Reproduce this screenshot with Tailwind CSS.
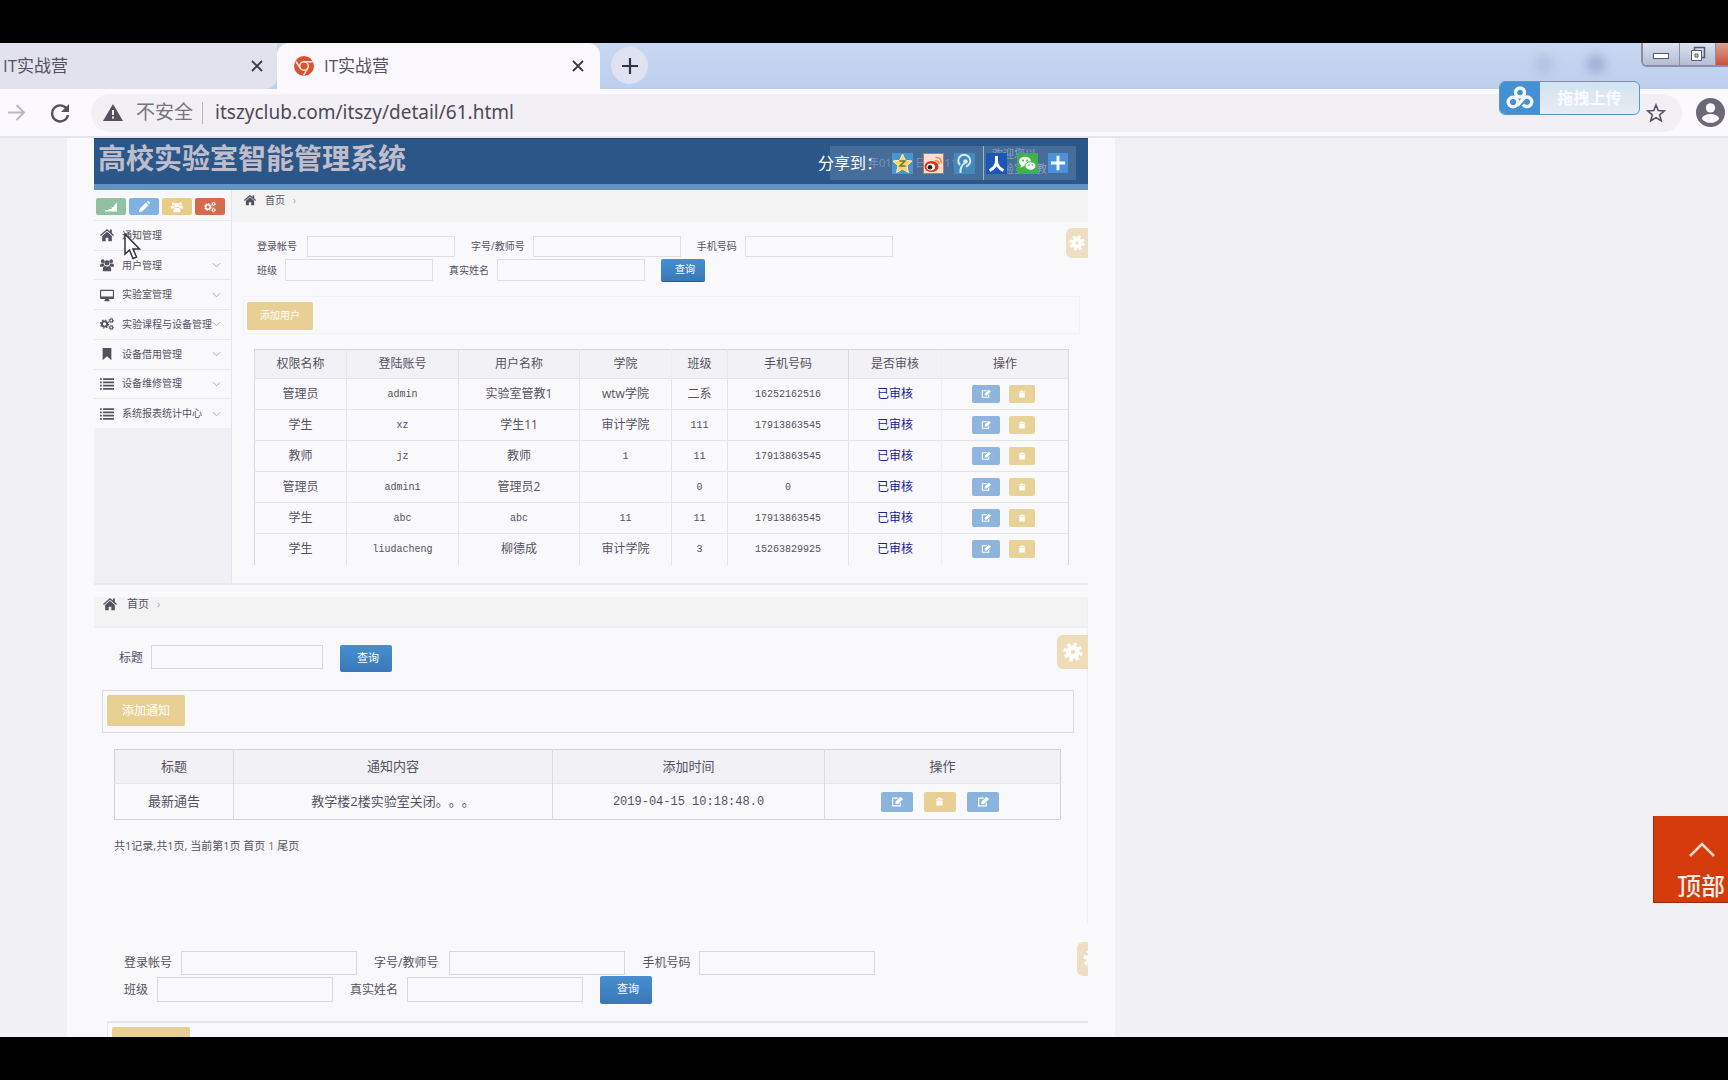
<!DOCTYPE html>
<html lang="zh-CN">
<head>
<meta charset="utf-8">
<title>IT实战营</title>
<script src="https://cdn.jsdelivr.net/npm/@tailwindcss/browser@4"></script>
</head>
<body class="h-screen flex flex-col overflow-hidden bg-black font-['Open_Sans','Noto_Sans_CJK_SC',sans-serif] text-[#55525f] [text-spacing-trim:space-all]">
<svg class="hidden">
  <symbol id="home" viewBox="0 0 16 16"><path fill="currentColor" d="M8 1 0 8l1 1.200L8 3.200l7 6L16 8l-2.500-2.200V1.800h-2V4zM8 4.300 2.500 9v6H6.500v-4h3v4h4V9z"/></symbol>
  <symbol id="users" viewBox="0 0 16 16"><g fill="currentColor"><circle cx="3.200" cy="3.600" r="2.100"/><circle cx="12.800" cy="3.600" r="2.100"/><circle cx="8" cy="5.500" r="2.900"/><path d="M0 10V8.500Q0 6.300 2 6.300h2.500q0 2 1 2.700-1.500.2-2.200 1zM16 10V8.500q0-2.200-2-2.200h-2.500q0 2-1 2.700 1.500.2 2.200 1zM3.300 15v-2.500Q3.500 9 6 9q2 1.200 4 0 2.500 0 2.700 3.500V15z"/></g></symbol>
  <symbol id="desktop" viewBox="0 0 16 16"><path fill="currentColor" d="M1 2h14q1 0 1 1v8.500q0 1-1 1h-5l.5 1.500H11v1H5v-1h.5L6 12.500H1q-1 0-1-1V3q0-1 1-1zm.3 1.300v6.500h13.400V3.300z"/></symbol>
  <symbol id="cogs" viewBox="0 0 16 16"><g fill="none" stroke="currentColor"><circle cx="5.200" cy="8" r="3" stroke-width="2.200"/><circle cx="5.200" cy="8" r="4.600" stroke-width="1.300" stroke-dasharray="1.800 1.810"/><circle cx="12.800" cy="4" r="1.700" stroke-width="1.300"/><circle cx="12.800" cy="12" r="1.700" stroke-width="1.300"/><circle cx="12.800" cy="4" r="2.700" stroke-width="1" stroke-dasharray="1 1.120"/><circle cx="12.800" cy="12" r="2.700" stroke-width="1" stroke-dasharray="1 1.120"/></g></symbol>
  <symbol id="bookmark" viewBox="0 0 16 16"><path fill="currentColor" d="M3 1h10v14l-5-4.500L3 15z"/></symbol>
  <symbol id="list" viewBox="0 0 16 16"><path fill="currentColor" d="M0 1.500h2v2H0zm3.500 0H16v2H3.500zM0 5.200h2v2H0zm3.500 0H16v2H3.500zM0 8.900h2v2H0zm3.500 0H16v2H3.500zM0 12.600h2v2H0zm3.500 0H16v2H3.500z"/></symbol>
  <symbol id="signal" viewBox="0 0 16 16"><path fill="currentColor" d="M0 14h16V2l-4 4v2H9v2.500H5V12H0z"/></symbol>
  <symbol id="pencil" viewBox="0 0 16 16"><path fill="currentColor" d="m1 15 1-4.500L10.500 2l3.500 3.500L5.500 14zM11.500 1l1-.8h1.500L15.800 2v1.500l-.8 1z"/></symbol>
  <symbol id="edit" viewBox="0 0 16 16"><path fill="currentColor" d="M2 2h8L8.500 3.700H3v8.600h8.500V10l1.700-1.700V14H1.300V2zm4 5.500L12.500 1 16 4 9.500 10.500H6z"/></symbol>
  <symbol id="trash" viewBox="0 0 16 16"><path fill="currentColor" d="M6 1h4l1 2h3.500v2h-13V3H5zM2.500 6h11v9h-11z"/></symbol>
  <symbol id="gear" viewBox="0 0 20 20"><circle cx="10" cy="10" r="4.500" fill="none" stroke="currentColor" stroke-width="4.500"/><circle cx="10" cy="10" r="8" fill="none" stroke="currentColor" stroke-width="3.200" stroke-dasharray="3.500 2.780"/></symbol>
  <symbol id="chev" viewBox="0 0 10 6"><path d="m1 1 4 4 4-4" fill="none" stroke="currentColor"/></symbol>
  <symbol id="close" viewBox="0 0 12 12"><path d="m1 1 10 10M11 1 1 11" stroke="currentColor" stroke-width="1.800"/></symbol>
</svg>

<div class="h-[43px] shrink-0 bg-black"></div>

<!-- tab strip -->
<header class="relative flex h-[46px] shrink-0 bg-linear-to-b from-[#c9d8f1] to-[#bccfee] text-[17px]">
  <div class="flex w-[277px] items-center rounded-br-xl bg-[#e1e2ee] pr-[14px] pl-[3px]"><span class="grow">IT实战营</span><button aria-label="关闭" class="text-[#3a3946]"><svg class="size-3"><use href="#close"/></svg></button></div>
  <div class="flex w-[323px] items-center rounded-t-xl bg-[#fbf9fd] pr-4 pl-[17px]">
    <svg class="mr-[10px] size-5" viewBox="0 0 20 20"><circle cx="10" cy="10" r="10" fill="#d9532e"/><circle cx="10" cy="10" r="4.300" fill="#d9532e" stroke="#fbe9e4" stroke-width="1.500"/><path d="M10 5.700h8.800M6.300 12.200 2 5.500m11.700 6.700L9.500 19.500" stroke="#fbe9e4" stroke-width="1.500"/></svg>
    <span class="grow">IT实战营</span><button aria-label="关闭" class="text-[#3a3946]"><svg class="size-3"><use href="#close"/></svg></button>
  </div>
  <button aria-label="新标签页" class="mt-1 ml-[11px] flex size-[37px] items-center justify-center rounded-full bg-[#dfe2f0] text-[#33323f]"><svg class="size-4" viewBox="0 0 16 16"><path d="M8 0v16M0 8h16" stroke="currentColor" stroke-width="2.200"/></svg></button>
  <div class="absolute top-[11px] right-[122px] flex gap-8 blur-[4px]"><span class="size-5 rounded-full bg-[#b3c2e2]"></span><span class="size-5 rounded-full bg-[#a3b3d8]"></span></div>
  <div class="absolute top-0 right-0 flex h-6 overflow-hidden rounded-bl-md border-b-2 border-l-2 border-[#8890a8]">
    <button aria-label="最小化" class="flex w-[37px] items-center justify-center border-r border-[#8890a8] bg-linear-to-b from-[#dce2f0] to-[#b4bdd3]"><span class="mt-1 h-[6px] w-4 border border-[#555b70] bg-white"></span></button>
    <button aria-label="还原" class="flex w-[36px] items-center justify-center border-r border-[#8890a8] bg-linear-to-b from-[#dce2f0] to-[#b4bdd3]"><svg class="size-4" viewBox="0 0 16 16"><path d="M4.500 4V1.500h10v10H12" fill="none" stroke="#555b70" stroke-width="1.500"/><path d="M1.500 4.500h10v10h-10z" fill="#fff" stroke="#555b70"/><path d="M5 8h3v3H5z" fill="#c5cbdc" stroke="#555b70"/></svg></button>
    <button aria-label="关闭窗口" class="w-3 bg-linear-to-b from-[#dfa194] to-[#c3533c]"></button>
  </div>
</header>

<!-- toolbar -->
<nav class="relative flex h-[49px] shrink-0 items-center border-b-2 border-[#e6e3ea] bg-[#fbf9fd] pr-[3px]">
  <button aria-label="前进" class="ml-[7px] text-[#bab8c2]"><svg class="size-[19px]" viewBox="0 0 19 19"><path d="M1 9.500h16M9.500 2l7.500 7.500L9.500 17" fill="none" stroke="currentColor" stroke-width="2"/></svg></button>
  <button aria-label="刷新" class="ml-6 text-[#55525f]"><svg class="size-5" viewBox="0 0 20 20"><path d="M16.500 5.500A8 8 0 1 0 18 12" fill="none" stroke="currentColor" stroke-width="2.400"/><path d="M19 1v8h-8z" fill="currentColor"/></svg></button>
  <div class="ml-[21px] flex h-[38px] grow items-center rounded-full bg-[#f2f0f5] pl-3">
    <svg class="h-[17px] w-5" viewBox="0 0 20 17"><path d="M10 0 20 17H0z" fill="#55525f"/><path d="M10 6v5m0 1.500v2" stroke="#f2f0f5" stroke-width="2"/></svg>
    <span class="ml-[13px] text-[19px] text-[#77747f]">不安全</span>
    <span class="ml-[9px] h-[22px] w-px bg-[#b5b3bc]"></span>
    <input aria-label="网址" value="itszyclub.com/itszy/detail/61.html" class="ml-3 w-10 grow bg-transparent font-['Noto_Sans',sans-serif] text-[19px] text-[#4d4a56] outline-none">
    <button aria-label="收藏" class="mr-4 text-[#55525f]"><svg class="size-5" viewBox="0 0 20 20"><path d="m10 2 2.300 5.600 6 .4-4.600 3.900 1.500 5.900L10 14.600l-5.200 3.200 1.500-5.900L1.700 8l6-.4z" fill="none" stroke="currentColor" stroke-width="1.600"/></svg></button>
  </div>
  <button aria-label="用户" class="ml-[14px]"><svg class="size-[29px]" viewBox="0 0 28 28"><circle cx="14" cy="14" r="14" fill="#6b6877"/><circle cx="14" cy="9.500" r="4.500" fill="#fbf9fd"/><path d="M5.500 20q2-4.500 8.500-4.500t8.500 4.500q-3 4-8.500 4t-8.500-4z" fill="#fbf9fd"/></svg></button>
  <button class="absolute -top-2 right-[88px] flex h-[34px] w-[141px] overflow-hidden rounded-md border border-[#5b96cc] bg-linear-to-b from-[#d3e3ef] to-[#e6ecf3] text-base text-white/85">
    <span class="flex h-full w-10 items-center justify-center bg-[#4590d2]"><svg class="h-6 w-7" viewBox="0 0 28 24" fill="none" stroke="#f3f8fd" stroke-width="3.400"><circle cx="14" cy="6.500" r="4.500"/><circle cx="7" cy="16" r="4.800"/><path d="M17 18.500a4.800 4.800 0 1 0 .5-6l-6 7"/></svg></span>
    <span class="flex h-full grow items-center justify-center font-bold">拖拽上传</span>
  </button>
</nav>

<!-- page -->
<main class="relative min-h-0 grow overflow-hidden bg-[#f1f0f5] pl-[67px]">
  <article class="h-full max-w-[1048px] overflow-hidden bg-[#f9f8fb] pr-[27px] pl-[27px]">
    <div class="flex h-[52px] items-start justify-between border-t border-b-[6px] border-t-[#1d4066] border-b-[#6593c0] bg-[#2b5688] pl-1">
      <h1 class="mt-[3px] text-[28px] leading-8 font-bold text-[#bfbdcb]">高校实验室智能管理系统</h1>
      <div class="relative mt-[7px] mr-3 flex h-[34px] w-[246px] items-center bg-[#466c99] pl-[62px]">
        <span class="absolute left-[38px] text-[11px] whitespace-pre text-[#7b95b7]">年01月11日 11:11分</span>
        <span class="absolute top-0 left-[162px] text-[11px] leading-[15px] text-[#8ba3c2]">欢迎您以<br>实验室管教1</span>
        <span class="absolute -left-3 text-base text-white">分享到：</span>
        <div class="relative flex items-center">
          <a href="#" aria-label="QQ空间"><svg class="size-[21px]" viewBox="0 0 21 21"><rect width="21" height="21" fill="#4b95cf"/><path d="m10.500 1 2.800 6.300 6.700.7-5 4.600 1.400 6.900-5.900-3.500-5.900 3.500L6 12.600 1 8l6.700-.7z" fill="#fbd65b" stroke="#fff2b8"/><path d="M7.500 8h5.500l-5 5h5.500" fill="none" stroke="#6f7242" stroke-width="1.500"/></svg></a>
          <a href="#" aria-label="微博" class="ml-[10px]"><svg class="size-[21px]" viewBox="0 0 21 21"><rect x=".5" y=".5" width="20" height="20" fill="#fbe0d2" stroke="#dd6b54"/><ellipse cx="8.500" cy="13.500" rx="7" ry="5.500" fill="#d3341d"/><ellipse cx="7.800" cy="14" rx="4.300" ry="3.400" fill="#fff"/><circle cx="7" cy="14.300" r="2.300" fill="#222"/><path d="M12 8q4-1 4 3.500M12.500 4.500q6-.5 6 6" fill="none" stroke="#e98a4c" stroke-width="1.600"/></svg></a>
          <a href="#" aria-label="腾讯微博" class="ml-[10px]"><svg class="size-[21px]" viewBox="0 0 21 21"><rect width="21" height="21" fill="#4488bd"/><path d="M6 12a6 6 0 1 1 6 1.500M6.500 20q-.5-7 4.500-10" fill="none" stroke="#d7ebf8" stroke-width="2"/><circle cx="11.500" cy="8.500" r="2.300" fill="#d7ebf8"/></svg></a>
          <span class="ml-2 h-[34px] w-px bg-[#9fb3cc]"></span>
          <a href="#" aria-label="人人网" class="ml-[2px]"><svg class="size-[21px]" viewBox="0 0 21 21"><rect width="21" height="21" fill="#1b57b6"/><path d="M10.500 3v5q0 6-7 9.500M10.500 8q0 6 7 9.500" fill="none" stroke="#fff" stroke-width="3"/></svg></a>
          <a href="#" aria-label="微信" class="ml-[10px]"><svg class="size-[21px]" viewBox="0 0 21 21"><rect width="21" height="21" fill="#3fb24f"/><ellipse cx="8" cy="8.500" rx="6" ry="4.800" fill="#f3fbf3"/><path d="m4 11-.5 4 3.500-2z" fill="#f3fbf3"/><ellipse cx="13.500" cy="13" rx="5.500" ry="4.300" fill="#f3fbf3" stroke="#3fb24f"/><g fill="#3fb24f"><circle cx="6" cy="7.500" r="1"/><circle cx="10" cy="7.500" r="1"/><circle cx="12" cy="12" r=".8"/><circle cx="15.500" cy="12" r=".8"/></g></svg></a>
          <a href="#" aria-label="更多" class="ml-[10px]"><svg class="size-[20px]" viewBox="0 0 21 21"><rect width="21" height="21" rx="1" fill="#4b92dc"/><path d="M10.500 3v15M3 10.500h15" stroke="#fff" stroke-width="3"/></svg></a>
        </div>
      </div>
    </div>

    <!-- first screen: user management -->
    <section class="flex h-[395px] border-b-2 border-[#ebe9ef]">
      <aside class="relative w-[138px] shrink-0 border-r border-[#e6e4eb] bg-[#f1f0f5]">
        <div class="flex h-[30px] gap-[3px] bg-[#f8f7fa] pt-2 pl-[2px] text-white">
          <button aria-label="统计" class="flex h-[17px] w-[30px] items-center justify-center rounded-xs bg-[#90c1a0]"><svg class="size-3"><use href="#signal"/></svg></button>
          <button aria-label="编辑" class="flex h-[17px] w-[30px] items-center justify-center rounded-xs bg-[#7fb2e2]"><svg class="size-3"><use href="#pencil"/></svg></button>
          <button aria-label="用户" class="flex h-[17px] w-[30px] items-center justify-center rounded-xs bg-[#e8cc88]"><svg class="size-3"><use href="#users"/></svg></button>
          <button aria-label="设置" class="flex h-[17px] w-[30px] items-center justify-center rounded-xs bg-[#d56a4c]"><svg class="size-3"><use href="#cogs"/></svg></button>
        </div>
        <ul id="menu" class="grid h-[208px] auto-rows-fr bg-[#f9f8fb] text-[10px]"></ul>
        <svg class="absolute top-[43px] left-[30px] h-[27px] w-[17px]" viewBox="0 0 17 27"><path d="M1 1v20l4.500-4 3.500 8.500 3.500-1.500L9 16h6.500z" fill="#fff" stroke="#33313b" stroke-width="1.500"/></svg>
      </aside>
      <div class="relative min-w-0 grow">
        <div class="flex h-8 items-start bg-[#f3f3f3] pt-1 pl-3 text-[10px]"><svg class="size-3"><use href="#home"/></svg><a href="#" class="ml-[9px] leading-3">首页</a><span class="ml-2 leading-3 text-[#a9a7af]">›</span></div>
        <button aria-label="设置" class="absolute top-[38px] right-0 flex h-[30px] w-[22px] items-center justify-center rounded-l-md bg-[#eedfc4] text-white"><svg class="size-4"><use href="#gear"/></svg></button>
        <form class="mt-[14px] flex flex-col gap-[2px] pl-[25px] text-[10px]">
          <div class="flex h-[21px] items-center">
            <label for="a1">登录帐号</label><input id="a1" class="mr-4 ml-[10px] h-full w-[148px] border border-[#e0dee5]">
            <label for="a2">字号/教师号</label><input id="a2" class="mr-4 ml-2 h-full w-[148px] border border-[#e0dee5]">
            <label for="a3">手机号码</label><input id="a3" class="ml-2 h-full w-[148px] border border-[#e0dee5]">
          </div>
          <div class="flex h-[22px] items-center">
            <label for="a4">班级</label><input id="a4" class="mr-4 ml-2 h-full w-[148px] border border-[#e0dee5]">
            <label for="a5">真实姓名</label><input id="a5" class="mr-4 ml-2 h-full w-[148px] border border-[#e0dee5]">
            <button type="button" class="h-[23px] w-[44px] rounded-xs border-b border-[#2c5d8f] bg-linear-to-b from-[#478fd0] to-[#3a78b8] pl-1 text-white">查询</button>
          </div>
        </form>
        <div class="mt-[15px] mr-2 ml-[11px] h-[38px] border border-[#f2f1f5] pt-1 pl-[3px]"><button class="h-7 w-[66px] rounded-xs bg-[#e8d095] text-[10px] text-white">添加用户</button></div>
        <table class="mt-[15px] ml-[22px] w-[815px] table-fixed border-collapse border border-b-0 border-[#d9d7de] text-center text-[12px]">
          <colgroup><col class="w-[92px]"><col class="w-[112px]"><col class="w-[121px]"><col class="w-[92px]"><col class="w-[56px]"><col class="w-[121px]"><col class="w-[93px]"><col></colgroup>
          <thead><tr class="h-[29px] bg-[#f2f1f5]"><th class="border-r border-[#e8e6ec] font-normal">权限名称</th><th class="border-r border-[#e2e0e7] font-normal">登陆账号</th><th class="border-r border-[#e8e6ec] font-normal">用户名称</th><th class="border-r border-[#f0eef3] font-normal">学院</th><th class="border-r border-[#e8e6ec] font-normal">班级</th><th class="border-r border-[#d9d7de] font-normal">手机号码</th><th class="border-r border-[#f0eef3] font-normal">是否审核</th><th class="font-normal">操作</th></tr></thead>
          <tbody id="rows"></tbody>
        </table>
      </div>
    </section>

    <!-- second screen: notices -->
    <section class="relative mt-3 border-r border-[#f1eff4]">
      <div class="flex h-[31px] items-start border-b-2 border-[#efedf1] bg-[#f3f3f3] pl-[9px] text-[11px]"><svg class="size-[14px]"><use href="#home"/></svg><a href="#" class="ml-[10px] leading-[14px]">首页</a><span class="ml-2 leading-[14px] text-[#a9a7af]">›</span></div>
      <button aria-label="设置" class="absolute top-[38px] -right-px flex h-[34px] w-[31px] items-center justify-center rounded-l-md bg-[#efdcb9] text-white"><svg class="size-5"><use href="#gear"/></svg></button>
      <form class="mt-[17px] flex h-[27px] items-start pl-[25px] text-[12px]"><label for="b1" class="mt-1">标题</label><input id="b1" class="ml-2 h-6 w-[172px] border border-[#d9d7de]"><button type="button" class="ml-[17px] h-[27px] w-[52px] rounded-xs bg-linear-to-b from-[#478fd0] to-[#3a78b8] pl-1 text-[11px] text-white">查询</button></form>
      <div class="mt-[18px] mr-[13px] ml-2 h-[43px] border border-[#dddbe2] pt-1 pl-1"><button class="h-[31px] w-[78px] rounded-xs bg-[#e8d095] text-[12px] text-white">添加通知</button></div>
      <table class="mt-4 ml-5 w-[947px] table-fixed border-collapse border border-[#d3d1d8] text-center text-[13px]">
        <colgroup><col class="w-[119px]"><col class="w-[319px]"><col class="w-[272px]"><col></colgroup>
        <thead><tr class="h-[34px] border-b border-[#e8e6ec] bg-[#f2f1f5]"><th class="border-r border-[#dddbe2] font-normal">标题</th><th class="border-r border-[#dddbe2] font-normal">通知内容</th><th class="border-r border-[#dddbe2] font-normal">添加时间</th><th class="font-normal">操作</th></tr></thead>
        <tbody><tr class="h-[36px]"><td class="border-r border-[#dddbe2]">最新通告</td><td class="border-r border-[#dddbe2]">教学楼2楼实验室关闭。。。</td><td class="border-r border-[#dddbe2] font-['Liberation_Mono',monospace] text-[12px]">2019-04-15 10:18:48.0</td>
          <td><div class="flex justify-center gap-[11px] pr-[6px] text-white">
            <button aria-label="编辑" class="flex h-5 w-8 items-center justify-center rounded-xs bg-[#8ab3de]"><svg class="size-3"><use href="#edit"/></svg></button>
            <button aria-label="删除" class="flex h-5 w-8 items-center justify-center rounded-xs bg-[#e8d095]"><svg class="size-[9px]"><use href="#trash"/></svg></button>
            <button aria-label="查看" class="flex h-5 w-8 items-center justify-center rounded-xs bg-[#8ab3de]"><svg class="size-3"><use href="#edit"/></svg></button>
          </div></td></tr></tbody>
      </table>
      <p class="mt-[18px] h-[86px] pl-5 text-[11px] leading-4">共1记录,共1页, 当前第1页 <a href="#">首页</a> <a href="#" class="text-[#b0565a]">1</a> <a href="#">尾页</a></p>
    </section>

    <!-- third screen: user list, cut off by the window -->
    <section class="relative pt-[27px]">
      <button aria-label="设置" class="absolute top-[18px] right-0 flex h-[34px] w-[11px] items-center overflow-hidden rounded-l-md bg-[#eedfc4] pl-[6px] text-white"><svg class="size-5 shrink-0"><use href="#gear"/></svg></button>
      <form class="flex flex-col gap-[2px] pl-[30px] text-[12px]">
        <div class="flex h-6 items-center">
          <label for="c1">登录帐号</label><input id="c1" class="mr-[17px] ml-[9px] h-full w-[176px] border border-[#d9d7de]">
          <label for="c2">字号/教师号</label><input id="c2" class="mr-[17px] ml-[11px] h-full w-[176px] border border-[#d9d7de]">
          <label for="c3">手机号码</label><input id="c3" class="ml-[9px] h-full w-[176px] border border-[#d9d7de]">
        </div>
        <div class="flex h-[25px] items-center">
          <label for="c4">班级</label><input id="c4" class="mr-[17px] ml-[9px] h-full w-[176px] border border-[#d9d7de]">
          <label for="c5">真实姓名</label><input id="c5" class="mr-[17px] ml-[9px] h-full w-[176px] border border-[#d9d7de]">
          <button type="button" class="h-[28px] w-[52px] rounded-xs bg-linear-to-b from-[#478fd0] to-[#3a78b8] pl-1 text-[11px] text-white">查询</button>
        </div>
      </form>
      <div class="mt-[19px] ml-[13px] h-[43px] border-t-2 border-l border-[#e8e6ec] pt-1 pl-1"><button aria-label="添加用户" class="h-[31px] w-[78px] rounded-xs bg-[#e8d095]"></button></div>
    </section>
  </article>

  <a href="#" class="absolute right-0 bottom-[134px] flex h-[87px] w-[75px] flex-col items-end overflow-hidden border-b border-l border-[#9c2a10] bg-[#d43a0a] pr-[3px] text-2xl leading-8 text-[#fdeee9]">
    <svg class="mt-[26px] mr-[10px] h-[15px] w-[26px] shrink-0" viewBox="0 0 26 15"><path d="m1 14 12-12 12 12" fill="none" stroke="#fbd9cd" stroke-width="2.500"/></svg>
    <span class="mt-[13px] font-medium">顶部</span>
  </a>
</main>

<div class="h-[43px] shrink-0 bg-black"></div>

<script>
const menu = [['home','通知管理'],['users','用户管理'],['desktop','实验室管理'],['cogs','实验课程与设备管理'],['bookmark','设备借用管理'],['list','设备维修管理'],['list','系统报表统计中心']];
document.getElementById('menu').innerHTML = menu.map(([icon, text], i) => `
  <li class="border-t border-[#e8e6ec]"><a href="#" class="flex h-full items-center pl-[6px]"><svg class="size-[14px] shrink-0"><use href="#${icon}"/></svg><span class="ml-2 grow whitespace-nowrap">${text}</span>${i ? '<svg class="mr-[10px] h-[6px] w-[9px] shrink-0 text-[#a3a1aa]"><use href="#chev"/></svg>' : ''}</a></li>`).join('');

const users = [
  ['管理员','admin','实验室管教1','wtw学院','二系','16252162516'],
  ['学生','xz','学生11','审计学院','111','17913863545'],
  ['教师','jz','教师','1','11','17913863545'],
  ['管理员','admin1','管理员2','','0','0'],
  ['学生','abc','abc','11','11','17913863545'],
  ['学生','liudacheng','柳德成','审计学院','3','15263829925'],
];
const cell = text => /^[\x00-\x7f]*$/.test(text)
  ? `<td class="border-r border-[#e5e3ea] font-['Liberation_Mono',monospace] text-[10px]">${text}</td>`
  : `<td class="border-r border-[#e5e3ea]">${text}</td>`;
document.getElementById('rows').innerHTML = users.map(u => `
  <tr class="h-[31px] border-t border-[#e5e3ea]">${u.map(cell).join('')}
  <td class="border-r border-[#f0eef3] text-[#20209a]">已审核</td>
  <td><div class="flex justify-center gap-[9px] pr-1 text-white">
    <button aria-label="编辑" class="flex h-[18px] w-7 items-center justify-center rounded-xs bg-[#8fb5de]"><svg class="size-[10px]"><use href="#edit"/></svg></button>
    <button aria-label="删除" class="flex h-[18px] w-[26px] items-center justify-center rounded-xs bg-[#e8d297]"><svg class="size-2"><use href="#trash"/></svg></button>
  </div></td></tr>`).join('');
</script>
</body>
</html>
